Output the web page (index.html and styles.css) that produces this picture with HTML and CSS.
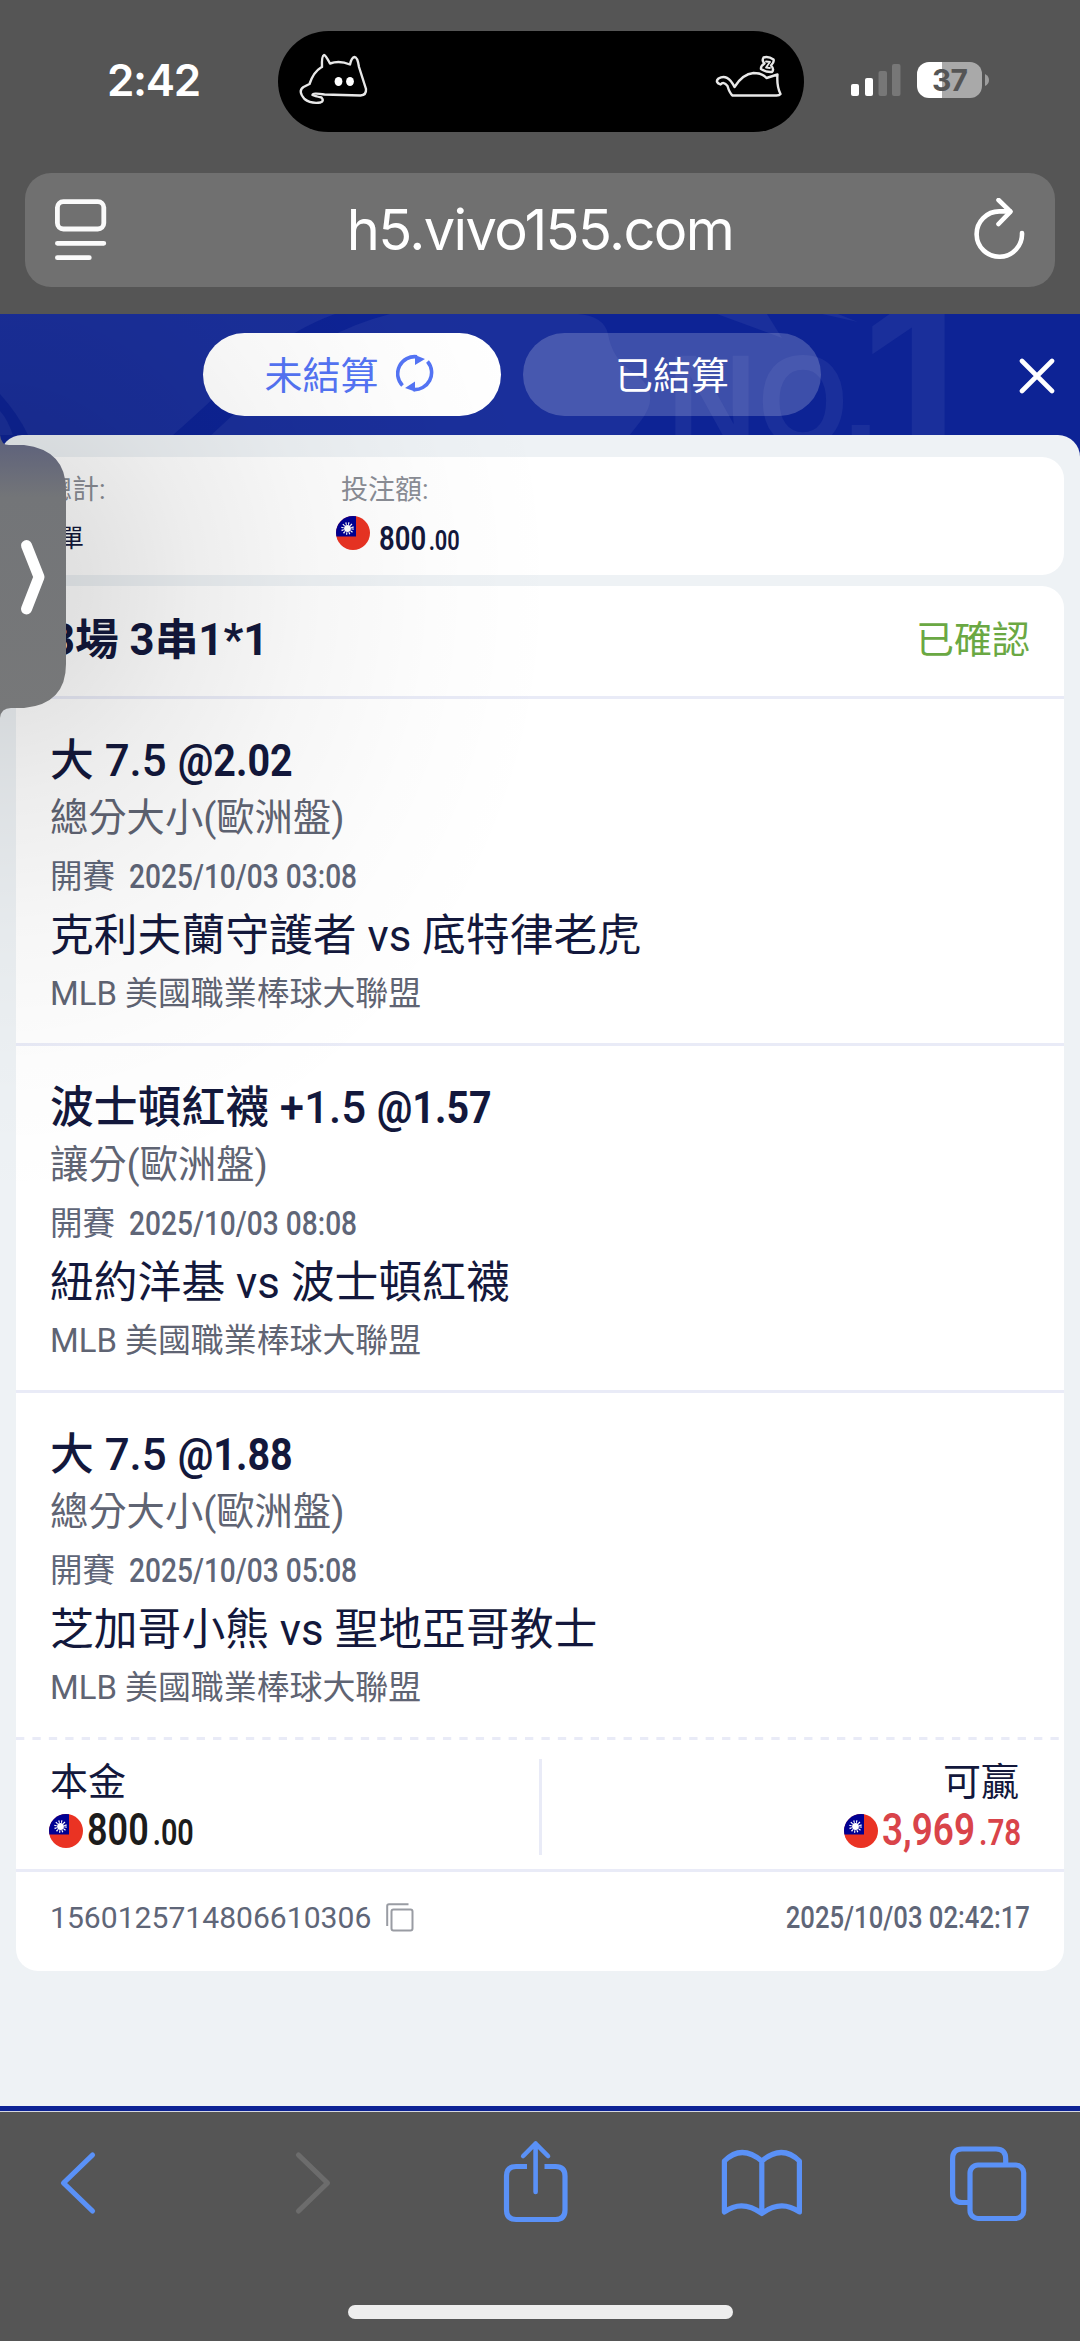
FILE: index.html
```html
<!DOCTYPE html>
<html lang="zh-Hant">
<head>
<meta charset="utf-8">
<title>h5.vivo155.com</title>
<link rel="stylesheet" href="styles.css">
</head>
<body>
<svg width="0" height="0" class="defs" aria-hidden="true">
  <defs>
    <clipPath id="round"><circle cx="17" cy="17" r="17"/></clipPath>
    <g id="flag" clip-path="url(#round)">
      <rect width="34" height="34" fill="#ea3323"/>
      <rect width="20" height="20.5" fill="#000093"/>
      <circle cx="11.5" cy="12.5" r="5" fill="none" stroke="#fff" stroke-width="2.6" stroke-dasharray="1.1 1.52"/>
      <circle cx="11.5" cy="12.5" r="3.4" fill="#fff"/>
    </g>
  </defs>
</svg>

<header class="browser-top">
  <div class="status">
    <div class="clock">2:42</div>
    <div class="island">
      <svg width="526" height="101" viewBox="277.500 31 526 101" fill="none" stroke="#e8e8e8" stroke-width="2.4" stroke-linejoin="round" stroke-linecap="round">
        <path d="M321.500 67 Q321 56 323.500 55 Q325 55 329.500 63.500 Q339 60 349.500 64.500 Q351 57.500 354 57 Q357 57 358.500 67 L365.500 89 Q366 95 360 95.500 L324 94.500 Q312 92.500 312 95 Q314 96 321 97.500 Q324 101 320 102.500 Q310 104 304 99 Q297 91 303 87 L309 84 Q313 72 320.500 67.500 Z"/>
        <ellipse cx="338" cy="81.500" rx="3.900" ry="4.600" fill="#fff" stroke="none"/>
        <ellipse cx="349.500" cy="81.500" rx="3.900" ry="4.600" fill="#fff" stroke="none"/>
        <path d="M720 84.500 Q714 82 718 78.500 Q727 73 734 87 Q742 74 753 73 Q762 73 766 78 L777 74.500 Q776 86 780 94 Q779 95.500 776 95.500 L732 95.500 Q729 93 727 86 Q723 81 720 84.500 Z"/>
        <path d="M763 57.500 Q768 56 773 59.500 Q774 62 770.500 65.500 Q774 69 771.500 72 Q766 72.500 760.500 69 Q760 66 764 63.500 Q761 61 763 57.500 Z"/>
        <path d="M765.500 61.500 L769.500 62 L765.500 67.500 L769.500 68" stroke-width="1.800"/>
      </svg>
    </div>
    <svg class="signal" width="50" height="36" viewBox="851 62 50 36" fill="#fff">
      <rect x="851" y="84" width="8" height="12" rx="2"/>
      <rect x="865" y="78" width="8" height="18" rx="2"/>
      <rect x="878.500" y="71" width="8.500" height="25" rx="2" fill="#777"/>
      <rect x="892" y="64" width="8.500" height="32" rx="2" fill="#777"/>
    </svg>
    <div class="battery">37</div>
    <svg class="battery-cap" width="5" height="12" viewBox="0 0 5 12"><path d="M0 0 Q4 2 4 6 Q4 10 0 12Z" fill="#9d9d9d"/></svg>
  </div>
  <div class="address">
    <svg width="52" height="62" viewBox="55 200 52 62" fill="none" stroke="#fafafa" stroke-width="4.800" stroke-linecap="round">
      <rect x="57.400" y="202.600" width="46.400" height="27.400" rx="6"/>
      <path d="M57.400 244.300H103.800M57.400 258.700H89.300"/>
    </svg>
    <div class="url"><span>h5.vivo155.com</span></div>
    <svg width="52" height="64" viewBox="973 197 52 64" fill="none" stroke="#fff" stroke-width="4.600" stroke-linecap="round" stroke-linejoin="round">
      <path d="M1010 210.400H999.400A22.700 22.700 0 1 0 1022 232"/>
      <path d="M998.500 199L1010.500 210.600L998.500 223"/>
    </svg>
  </div>
</header>

<main class="app">
  <div class="tabs-bar">
    <svg class="tabs-art" width="1080" height="141" viewBox="0 0 1080 141" fill="#1a2f9b">
      <path d="M0 0H578Q604 2 608 20Q612 44 632 58Q664 78 640 108L614 141H0Z"/>
      <path d="M335 0H390Q320 18 270 66L190 141H150Q206 93 235 63Q285 18 335 0Z" fill="#0d2395"/>
      <path d="M0 80Q18 100 28 121L34 141H18Q12 110 0 97Z" fill="#0d2395"/>
      <path d="M717 0H767L782 24ZM822 0H838L858 8Z"/>
      <text x="667" y="130" font-size="128" textLength="90" lengthAdjust="spacingAndGlyphs">N</text>
      <text x="758" y="132" font-size="130" textLength="90" lengthAdjust="spacingAndGlyphs">O</text>
      <text x="843" y="130" font-size="128">.</text>
      <text x="856" y="162" font-size="260" textLength="133" lengthAdjust="spacingAndGlyphs">1</text>
    </svg>
    <button class="tab tab-on">未結算
      <svg width="38" height="38" viewBox="0 0 38 38" fill="none" stroke="#5474f5" stroke-width="3.600">
        <path d="M6.500 31.500A17 17 0 0 1 21 2.800M31.500 7.500A17 17 0 0 1 17 35.500"/>
        <path d="M19 1L29 5L19 11ZM19 37.500L9 34L19 27.500Z" fill="#5474f5" stroke="none"/>
      </svg>
    </button>
    <button class="tab">已結算</button>
    <svg class="close" width="36" height="36" viewBox="0 0 36 36" stroke="#fff" stroke-width="4.600" stroke-linecap="round"><path d="M3 3L33 33M33 3L3 33"/></svg>
  </div>

  <div class="sheet">
    <section class="summary">
      <div class="sum-col sum-first">
        <div class="sum-label">總計:</div>
        <div class="sum-value">1單</div>
      </div>
      <div class="sum-col">
        <div class="sum-label sum-indent">投注額:</div>
        <div class="sum-value">
          <svg width="34" height="34"><use href="#flag"/></svg>
          <span class="sum-num"><span class="din">800<small>.00</small></span></span>
        </div>
      </div>
    </section>

    <section class="ticket">
      <div class="ticket-head">
        <div class="combo">3場 3串1*1</div>
        <div class="state">已確認</div>
      </div>
      <div class="leg">
        <div class="pick">大 7.5 <b>@2.02</b></div>
        <div class="market">總分大小(歐洲盤)</div>
        <div class="start">開賽 <b>2025/10/03 03:08</b></div>
        <div class="teams">克利夫蘭守護者 vs 底特律老虎</div>
        <div class="league">MLB 美國職業棒球大聯盟</div>
      </div>
      <div class="leg">
        <div class="pick">波士頓紅襪 +1.5 <b>@1.57</b></div>
        <div class="market">讓分(歐洲盤)</div>
        <div class="start">開賽 <b>2025/10/03 08:08</b></div>
        <div class="teams">紐約洋基 vs 波士頓紅襪</div>
        <div class="league">MLB 美國職業棒球大聯盟</div>
      </div>
      <div class="leg">
        <div class="pick">大 7.5 <b>@1.88</b></div>
        <div class="market">總分大小(歐洲盤)</div>
        <div class="start">開賽 <b>2025/10/03 05:08</b></div>
        <div class="teams">芝加哥小熊 vs 聖地亞哥教士</div>
        <div class="league">MLB 美國職業棒球大聯盟</div>
      </div>
      <svg class="dash" width="1048" height="3" viewBox="0 0 1048 3"><path d="M0 1.500H1048" stroke="#e9ebf7" stroke-width="3" stroke-dasharray="8.300 8.120"/></svg>
      <div class="money">
        <div class="stake">
          <div class="money-label">本金</div>
          <div class="money-value">
            <svg width="34" height="34"><use href="#flag"/></svg>
            <span class="stake-num"><span class="din">800<small>.00</small></span></span>
          </div>
        </div>
        <div class="money-split"></div>
        <div class="win">
          <div class="money-label">可贏</div>
          <div class="money-value">
            <svg width="34" height="34"><use href="#flag"/></svg>
            <span class="win-num"><span class="din">3,969<small>.78</small></span></span>
          </div>
        </div>
      </div>
      <div class="ticket-foot">
        <div class="order">1560125714806610306</div>
        <svg width="28" height="29" viewBox="0 0 28 29" fill="none" stroke="#999ca3" stroke-width="2"><rect x="5.500" y="6.500" width="21" height="21" rx="2"/><path d="M1.200 23V3Q1.200 1.200 3 1.200H22.500"/></svg>
        <div class="placed"><span>2025/10/03 02:42:17</span></div>
      </div>
    </section>
  </div>

  <div class="drawer-shade"></div>
  <svg class="drawer" width="67" height="285" viewBox="0 434 67 285">
    <defs><linearGradient id="tab" x1="0" y1="0" x2="0" y2="1"><stop offset="0" stop-color="#5c607c"/><stop offset=".22" stop-color="#737578"/><stop offset="1" stop-color="#777879"/></linearGradient></defs>
    <path d="M0 435Q1 445 9 445H24Q66 450 66 490V664Q66 704 24 708H11Q1 708 0 718Z" fill="url(#tab)"/>
    <path d="M26.500 545.500L39 577L26.500 609" fill="none" stroke="#fff" stroke-width="11" stroke-linecap="round" stroke-linejoin="round"/>
  </svg>
</main>

<footer class="browser-bottom">
  <nav class="tools">
    <svg width="38" height="64" viewBox="59 2151 38 64"><path d="M92.500 2155L63.500 2183L92.500 2211"/></svg>
    <svg class="off" width="38" height="64" viewBox="294 2151 38 64"><path d="M298.500 2155L327.500 2183L298.500 2211"/></svg>
    <svg width="68" height="86" viewBox="501 2139 68 86"><path d="M527 2166.500H516Q506.500 2166.500 506.500 2176V2210Q506.500 2219.500 516 2219.500H555.500Q565 2219.500 565 2210V2176Q565 2166.500 555.500 2166.500H544.500" stroke-linecap="butt"/><path d="M535.600 2192V2143.500M523.200 2156L535.600 2143.500L548 2156" stroke-width="4.600"/></svg>
    <svg width="84" height="72" viewBox="720 2147 84 72"><path d="M724.400 2212V2161Q741.500 2144 761.800 2161Q782 2144 799.400 2161V2212Q781 2199 761.800 2213.500Q742 2199 724.400 2212ZM761.800 2161V2213"/></svg>
    <svg width="78" height="77" viewBox="949 2145 78 77"><rect x="970" y="2165" width="53.700" height="53.500" rx="8"/><path d="M970 2202.500H962Q952.600 2202.500 952.600 2193V2159Q952.600 2149 962 2149H996Q1005.700 2149 1005.700 2159V2164" stroke-linecap="butt"/></svg>
  </nav>
  <div class="home"></div>
</footer>
</body>
</html>
```
FILE: styles.css
```css
* { box-sizing: border-box; }
body {
  margin: 0;
  width: 1080px;
  height: 2341px;
  overflow: hidden;
  display: flex;
  flex-direction: column;
  background: #555;
  font-family: Roboto, "Noto Sans CJK TC", sans-serif;
  color: #13183c;
}
svg { display: block; flex: none; }
.defs { position: absolute; }

/* browser chrome, top */
.browser-top { height: 314px; padding-top: 31px; background: #555; }
.status { display: flex; align-items: flex-start; height: 142px; color: #fff; }
.clock {
  width: 277.5px;
  padding-left: 107px;
  font: 600 44px/98px Inter, sans-serif;
  letter-spacing: -1.3px;
}
.island { width: 526px; height: 101px; border-radius: 51px; background: #000; }
.signal { margin: 31px 0 0 47.500px; }
.battery {
  margin: 31px 0 0 16px;
  width: 65px;
  height: 36px;
  border-radius: 12px;
  background: linear-gradient(90deg, #fff 25px, #a9a9a9 25px);
  color: #555;
  font: 700 30px/36px Inter, sans-serif;
  text-align: center;
  letter-spacing: -1px;
}
.battery-cap { margin: 43px 0 0 3px; }
.address {
  margin: 0 25px;
  height: 114px;
  padding: 0 30px;
  display: flex;
  align-items: center;
  justify-content: space-between;
  border-radius: 26px;
  background: #707070;
}
.url { color: #fff; font: 400 56px/115px Inter, sans-serif; letter-spacing: -1.6px; }

/* page header */
.app { position: relative; height: 1797px; background: #0d2395; }
.tabs-bar { position: relative; height: 121px; padding: 19px 25px 0 203px; display: flex; gap: 22px; overflow: hidden; }
.tabs-art { position: absolute; left: 0; top: 0; font-family: "Liberation Sans", sans-serif; font-weight: 700; }
.tab {
  position: relative;
  width: 298px;
  height: 83px;
  padding: 0 0 4px;
  border: 0;
  border-radius: 42px;
  display: flex;
  align-items: center;
  justify-content: center;
  gap: 17px;
  background: rgba(255, 255, 255, .2);
  color: #fff;
  font: 400 38px/78px "Noto Sans CJK TC", sans-serif;
}
.tab-on { padding-right: 6px; background: #fff; color: #5474f5; }
.close { position: relative; margin: 25px 0 0 auto; }

/* bet list */
.sheet {
  position: relative;
  height: 1671px;
  padding: 22px 16px 0;
  border-radius: 22px 22px 0 0;
  background: #eef2f5;
}
.summary { height: 118px; padding: 0 34px; display: flex; border-radius: 22px; background: #fff; }
.sum-col { width: 286px; }
.sum-first { margin-left: -5px; width: 291px; }
.sum-label { margin-top: 14px; font-size: 27px; line-height: 38px; color: #8a8d95; }
.sum-indent { padding-left: 5px; }
.sum-value { display: flex; height: 60px; align-items: center; gap: 9px; font-size: 25px; line-height: 60px; }
.sum-value svg { margin-bottom: 12px; }
.din { display: inline-block; white-space: nowrap; transform-origin: 0 50%; font-weight: 600; }
.sum-num { width: 80px; font-size: 34px; }
.sum-num .din { transform: scaleX(.81); }
.sum-num small { font-size: 27px; margin-left: 3px; }

.ticket { margin-top: 11px; height: 1385px; border-radius: 22px; background: #fff; }
.ticket-head { height: 110px; padding: 0 34px; display: flex; justify-content: space-between; line-height: 109px; }
.combo { font-size: 43.700px; font-weight: 700; }
.state { font-size: 38px; color: #6aa843; }
.leg { height: 347px; padding: 33px 34px 0; border-top: 3px solid #e9ebf7; white-space: nowrap; }
.leg > div { height: 58.300px; line-height: 58.300px; }
.leg b { display: inline-block; transform-origin: 0 50%; }
.pick { font-size: 43.800px; font-weight: 500; }
.pick b { font-weight: 700; transform: scaleX(.9); }
.leg .market { font-size: 38.300px; line-height: 56.500px; color: #5f6473; }
.leg .start { font-size: 32.500px; line-height: 56px; color: #5f6678; }
.start b { margin-left: 6px; font-size: 33px; font-weight: 500; transform: scaleX(.852); }
.teams { font-size: 43.800px; }
.league { font-size: 32.900px; color: #5f6473; }

.money { height: 129px; padding: 19px 0 0 34px; display: flex; justify-content: space-between; }
.money-split { width: 3px; height: 96px; background: #e9ebf7; }
.stake { width: 489px; }
.win { width: 522px; padding-right: 42px; }
.win .money-label { text-align: right; padding-right: 3px; }
.win .money-value { justify-content: flex-end; }
.money-label { height: 48px; font-size: 38px; line-height: 46px; }
.money-value { display: flex; align-items: center; height: 48px; line-height: 48px; gap: 4px; font-size: 45px; }
.stake .money-value svg { margin-left: -1px; }
.money-value small { font-size: 36px; margin-left: 5px; }
.stake-num { width: 110px; color: #1c1c1c; }
.stake-num .din { transform: scaleX(.8); }
.win-num { width: 140px; color: #d9444a; }
.win-num .din { transform: scaleX(.82); }
.ticket-foot { height: 102px; padding: 0 34px 9px; display: flex; align-items: center; border-top: 3px solid #e9ebf7; color: #5f6678; }
.order { font-size: 30.100px; width: 336px; }
.placed { margin-left: auto; font-size: 31px; font-weight: 500; }
.placed span { display: inline-block; transform: scaleX(.828); transform-origin: 100% 50%; }

/* pull-out handle lying over the page */
.drawer-shade {
  position: absolute;
  left: 0;
  top: 0;
  width: 600px;
  height: 900px;
  background: radial-gradient(ellipse 560px 620px at 0 270px, rgba(0, 0, 0, .14), rgba(0, 0, 0, .115) 16%, rgba(0, 0, 0, .07) 34%, rgba(0, 0, 0, .035) 55%, rgba(0, 0, 0, .01) 78%, transparent);
}
.drawer { position: absolute; left: 0; top: 120px; }

/* browser chrome, bottom */
.browser-bottom { height: 230px; background: #555; border-top: 1px solid #d5d7e0; }
.tools {
  height: 193px;
  padding: 0 53px 0 59px;
  display: flex;
  align-items: flex-start;
  fill: none;
  stroke: #5a91f7;
  stroke-width: 5.200;
  stroke-linecap: round;
  stroke-linejoin: round;
}
.tools svg { margin-top: 39px; }
.tools svg:nth-child(2) { margin-left: 197px; }
.tools svg:nth-child(3) { margin: 27px 0 0 169px; }
.tools svg:nth-child(4) { margin: 35px 0 0 151px; }
.tools svg:nth-child(5) { margin: 33px 0 0 145px; }
.off { stroke: #6c6c6c; }
.home { margin: 0 auto; width: 385px; height: 14px; border-radius: 7px; background: #eee; }
```
